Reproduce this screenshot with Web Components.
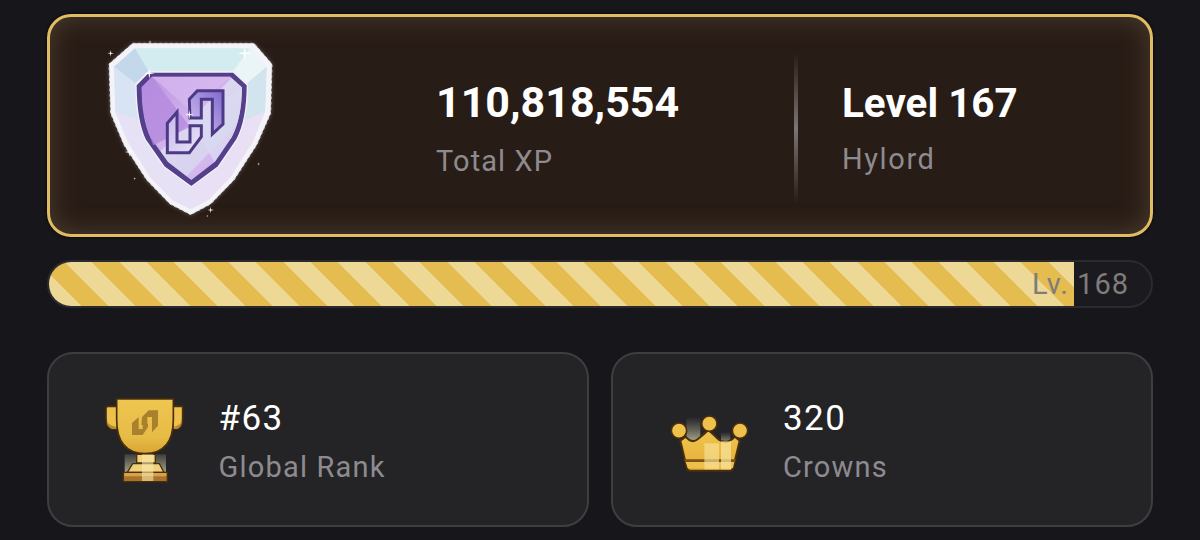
<!DOCTYPE html>
<html lang="en">
<head>
<meta charset="utf-8">
<title>Profile stats</title>
<style>
  html, body { margin: 0; background: #17161a; }
  body { font-family: Roboto, "Liberation Sans", sans-serif; width: 1200px; height: 540px; overflow: hidden; }
</style>
</head>
<body>
<stats-page>
  <level-panel>
    <rank-shield slot="badge"></rank-shield>
    <stat-block slot="xp" size="large" label="Total XP">110,818,554</stat-block>
    <stat-block slot="level" size="level" label="Hylord">Level 167</stat-block>
  </level-panel>
  <xp-bar percent="93" label="Lv. 168"></xp-bar>
  <card-row>
    <info-card>
      <trophy-icon slot="icon"></trophy-icon>
      <stat-block size="small" label="Global Rank">#63</stat-block>
    </info-card>
    <info-card crown>
      <crown-icon slot="icon"></crown-icon>
      <stat-block size="small" label="Crowns">320</stat-block>
    </info-card>
  </card-row>
</stats-page>

<script>
class StatsPage extends HTMLElement {
  constructor() {
    super();
    this.attachShadow({ mode: 'open' });
  }

  connectedCallback() {
    this.shadowRoot.innerHTML = `
      <style>
        :host {
          display: block;
          padding: 14px 47px 0;
          box-sizing: border-box;
          width: 1200px;
          height: 540px;
        }
      </style>
      <slot></slot>
    `;
  }
}

class CardRow extends HTMLElement {
  constructor() {
    super();
    this.attachShadow({ mode: 'open' });
  }

  connectedCallback() {
    this.shadowRoot.innerHTML = `
      <style>
        :host {
          display: grid;
          grid-template-columns: 542px 542px;
          gap: 22px;
          margin-top: 44px;
        }
      </style>
      <slot></slot>
    `;
  }
}

class LevelPanel extends HTMLElement {
  constructor() {
    super();
    this.attachShadow({ mode: 'open' });
  }

  connectedCallback() {
    this.shadowRoot.innerHTML = `
      <style>
        :host {
          display: flex;
          align-items: stretch;
          box-sizing: border-box;
          height: 223px;
          width: 1106px;
          border: 3px solid #e1bc62;
          border-radius: 24px;
          background: #281c16;
          box-shadow: inset 0 0 26px #4c3e30, 0 0 3px #000;
        }
        .badge {
          width: 346px;
          padding: 13px 0 0 40px;
          flex: none;
        }
        .xp {
          width: 358px;
          flex: none;
          align-self: center;
          padding-top: 5px;
        }
        .divider {
          width: 4px;
          flex: none;
          margin: 36px 0 30px;
          background: linear-gradient(180deg, transparent, #7b7573 50%, transparent);
          filter: blur(.6px);
        }
        .level {
          padding-left: 44px;
          padding-top: 4px;
          align-self: center;
        }
      </style>
      <div class="badge"><slot name="badge"></slot></div>
      <div class="xp"><slot name="xp"></slot></div>
      <div class="divider"></div>
      <div class="level"><slot name="level"></slot></div>
    `;
  }
}

class StatBlock extends HTMLElement {
  constructor() {
    super();
    this.attachShadow({ mode: 'open' });
  }

  connectedCallback() {
    const label = this.getAttribute('label') || '';
    this.shadowRoot.innerHTML = `
      <style>
        :host { display: block; color: #fff; }
        .value { font-weight: 700; font-size: 43px; line-height: 52px; white-space: nowrap; }
        .label { color: #8e8b90; font-size: 29px; line-height: 38px; letter-spacing: 1.1px; white-space: nowrap; margin-top: 14px; }
        :host([size="level"]) .value { font-size: 40.4px; }
        :host([size="level"]) .label { letter-spacing: 1.6px; margin-top: 10px; }
        :host([size="small"]) .value { font-weight: 400; font-size: 35px; line-height: 40px; letter-spacing: 1.4px; }
        :host([size="small"]) .label { line-height: 36px; margin-top: 10px; letter-spacing: 1.2px; }
      </style>
      <div class="value"><slot></slot></div>
      <div class="label">${label}</div>
    `;
  }
}

class XpBar extends HTMLElement {
  constructor() {
    super();
    this.attachShadow({ mode: 'open' });
  }

  connectedCallback() {
    const percent = this.getAttribute('percent') || '0';
    const label = this.getAttribute('label') || '';
    this.shadowRoot.innerHTML = `
      <style>
        :host {
          display: block;
          position: relative;
          box-sizing: border-box;
          height: 48px;
          width: 1106px;
          margin-top: 23px;
          border: 2px solid #2b2b2f;
          border-radius: 24px;
          background: #1b1b1f;
          overflow: hidden;
        }
        .fill {
          height: 100%;
          width: ${percent}%;
          box-sizing: border-box;
          background: repeating-linear-gradient(45deg,
            #eed896 3.54px 22.86px, #e5bc50 22.86px 42.18px);
        }
        .label {
          position: absolute;
          right: 22px;
          top: 0;
          line-height: 44px;
          font-size: 29px;
          letter-spacing: 1px;
          color: #807c7a;
        }
      </style>
      <div class="fill"></div>
      <div class="label">${label}</div>
    `;
  }
}

class InfoCard extends HTMLElement {
  constructor() {
    super();
    this.attachShadow({ mode: 'open' });
  }

  connectedCallback() {
    this.shadowRoot.innerHTML = `
      <style>
        :host {
          display: flex;
          align-items: center;
          box-sizing: border-box;
          height: 175px;
          border: 2.5px solid #3e3e42;
          border-radius: 26px;
          background: #242427;
        }
        .icon { width: 169.5px; flex: none; padding-left: 40.5px; box-sizing: border-box; }
        :host([crown]) .icon { padding-left: 41.5px; width: 170px; }
        .text { padding-top: 4px; }
      </style>
      <div class="icon"><slot name="icon"></slot></div>
      <div class="text"><slot></slot></div>
    `;
  }
}

class RankShield extends HTMLElement {
  constructor() {
    super();
    this.attachShadow({ mode: 'open' });
  }

  connectedCallback() {
    const sparkle = (x, y, r) =>
      `<path d="M${x} ${y - r}L${x + r * .14} ${y - r * .14}L${x + r} ${y}L${x + r * .14} ${y + r * .14}L${x} ${y + r}L${x - r * .14} ${y + r * .14}L${x - r} ${y}L${x - r * .14} ${y - r * .14}Z" fill="#fff"/>`;
    const outline = 'M128 40H492L546 102L542 250L500 345L432 450L362 522L302 554L240 522L170 450L102 345L62 250L57 102Z';
    this.shadowRoot.innerHTML = `
      <style>
        :host { display: block; width: 200px; height: 195px; }
        svg { display: block; }
      </style>
      <svg width="200" height="195" viewBox="0 0 600 585" role="img" aria-label="Hylord badge">
        <defs>
          <linearGradient id="rim" x1="0" y1="0" x2="0" y2="1">
            <stop offset="0" stop-color="#e6f1f5"/>
            <stop offset=".55" stop-color="#d6e1f1"/>
            <stop offset=".72" stop-color="#e3dcf2"/>
            <stop offset="1" stop-color="#efe9f6"/>
          </linearGradient>
          <linearGradient id="gem" x1="0" y1="0" x2="1" y2="1">
            <stop offset="0" stop-color="#b98fe0"/>
            <stop offset=".45" stop-color="#d2b4ec"/>
            <stop offset=".46" stop-color="#dcd6f0"/>
            <stop offset=".7" stop-color="#d7d2ef"/>
            <stop offset=".71" stop-color="#d5b8ee"/>
            <stop offset="1" stop-color="#c7a5e6"/>
          </linearGradient>
          <linearGradient id="logoTop" x1="0" y1="1" x2="1" y2="0">
            <stop offset="0" stop-color="#d6c4f0"/>
            <stop offset="1" stop-color="#8068cf"/>
          </linearGradient>
          <linearGradient id="logoLow" x1="0" y1="0" x2="1" y2="1">
            <stop offset="0" stop-color="#c9b6ec"/>
            <stop offset="1" stop-color="#e8e6f6"/>
          </linearGradient>
          <filter id="soft" x="-10%" y="-10%" width="120%" height="120%"><feGaussianBlur stdDeviation="6"/></filter>
        </defs>
        <path d="${outline}" fill="#a9a4b2" opacity=".45" filter="url(#soft)"/>
        <path d="${outline}" fill="#f4f4f8" stroke="#d8d8e0" stroke-width="3" stroke-dasharray="8 8"/>
        <path d="M135 55H480L530 110L525 245L488 335L422 440L355 510L302 538L247 510L180 440L114 335L76 245L72 110Z" fill="url(#rim)"/>
        <path d="M135 55H480L430 122H175Z" fill="#d3ecef"/>
        <path d="M72 110L135 55L175 122L136 160Z" fill="#c3d8ea"/>
        <path d="M530 110L480 55L430 122L472 160Z" fill="#eaf5f7"/>
        <path d="M72 110L136 160L150 270L76 245Z" fill="#d8e4f3"/>
        <path d="M530 110L472 160L455 275L525 245Z" fill="#d2e4ee"/>
        <path d="M76 245L150 270L302 480L302 538L247 510L180 440L114 335Z" fill="#e6e1f5"/>
        <path d="M525 245L455 275L302 480V538L355 510L422 440L488 335Z" fill="#e9e0f5"/>
        <path d="M176 126H430L472 165Q472 270 440 330L385 410L304 470L222 410L166 330Q138 270 138 165Z" fill="#54408a" stroke="#f4f0fa" stroke-width="4"/>
        <path d="M186 140H421L456 172Q455 266 425 322L374 396L304 450L234 396L181 322Q155 266 155 172Z" fill="url(#gem)"/>
        <path d="M186 140H421L300 240Z" fill="#d7b8ef" opacity=".75"/>
        <path d="M155 172L186 140L300 290L190 346Q155 266 155 172Z" fill="#b48ade" opacity=".8"/>
        <path d="M300 270L456 172Q455 266 425 322L374 396Z" fill="#dad9f1" opacity=".8"/>
        <path d="M298 208L322 182H399V282L367 312V208H334V264H300Z" fill="url(#logoTop)" stroke="#4d3a86" stroke-width="9" stroke-linejoin="miter"/>
        <path d="M232 280L261 246V336H300V287H334V320L298 368H232Z" fill="url(#logoLow)" stroke="#4d3a86" stroke-width="9" stroke-linejoin="miter"/>
        <g>
          ${sparkle(62, 70, 10)}
          ${sparkle(180, 36, 6)}
          ${sparkle(178, 130, 16)}
          ${sparkle(298, 254, 14)}
          ${sparkle(118, 366, 14)}
          ${sparkle(134, 446, 5)}
          ${sparkle(506, 402, 5)}
          ${sparkle(362, 540, 10)}
          ${sparkle(352, 558, 4)}
          ${sparkle(464, 70, 22)}
        </g>
      </svg>
    `;
  }
}

class TrophyIcon extends HTMLElement {
  constructor() {
    super();
    this.attachShadow({ mode: 'open' });
  }

  connectedCallback() {
    this.shadowRoot.innerHTML = `
      <style>
        :host { display: block; width: 110px; height: 110px; }
        svg { display: block; }
      </style>
      <svg width="110" height="110" viewBox="0 0 330 330" role="img" aria-label="Trophy">
        <defs>
          <linearGradient id="cup" x1="0" y1="0" x2="0" y2="1">
            <stop offset="0" stop-color="#efc650"/>
            <stop offset=".7" stop-color="#e6bb46"/>
            <stop offset="1" stop-color="#d9a534"/>
          </linearGradient>
          <linearGradient id="glow" x1="0" y1="0" x2="0" y2="1">
            <stop offset="0" stop-color="#d9d5b0" stop-opacity=".15"/>
            <stop offset="1" stop-color="#d9d5b0" stop-opacity=".7"/>
          </linearGradient>
        </defs>
        <path d="M104 208H228V262H104Z" fill="url(#glow)"/>
        <path d="M52 64H84V132H66Q48 126 48 100V68Z" fill="#eec04c" stroke="#4a2f0c" stroke-width="5"/>
        <path d="M50 108Q56 122 80 126V132H66Q50 126 50 108Z" fill="#b98a2c"/>
        <path d="M248 64H278V100Q278 126 262 132H248Z" fill="#eec04c" stroke="#4a2f0c" stroke-width="5"/>
        <path d="M250 126Q270 122 276 108Q276 126 262 132H250Z" fill="#b98a2c"/>
        <path d="M80 42H250V104Q250 204 165 206Q80 204 80 104Z" fill="url(#cup)" stroke="#4a2f0c" stroke-width="5"/>
        <path d="M140 208H196V234H140Z" fill="#f0d27a" stroke="#4a2f0c" stroke-width="4"/>
        <path d="M128 236H208L222 262H112Z" fill="#efd27e" stroke="#4a2f0c" stroke-width="4"/>
        <path d="M100 262H232V290H100Z" fill="#a8742c" stroke="#4a2f0c" stroke-width="4"/>
        <path d="M103 264H229V274H103Z" fill="#d9a24a"/>
        <path d="M156 208H190V288H156Z" fill="#f8e8a8" opacity=".6"/>
        <path d="M156 96L176 76H204V122L186 142V96H172V120H154ZM126 114L146 96V132H158V116H174V126L158 150H126Z" fill="#a9802e"/>
      </svg>
    `;
  }
}

class CrownIcon extends HTMLElement {
  constructor() {
    super();
    this.attachShadow({ mode: 'open' });
  }

  connectedCallback() {
    this.shadowRoot.innerHTML = `
      <style>
        :host { display: block; width: 110px; height: 90px; margin-top: 10px; }
        svg { display: block; }
      </style>
      <svg width="110" height="90" viewBox="0 0 330 270" role="img" aria-label="Crown">
        <defs>
          <linearGradient id="gold" x1="0" y1="0" x2="0" y2="1">
            <stop offset="0" stop-color="#f0c64f"/>
            <stop offset="1" stop-color="#e4ae36"/>
          </linearGradient>
          <linearGradient id="beam" x1="0" y1="0" x2="0" y2="1">
            <stop offset="0" stop-color="#8a8a80" stop-opacity="0"/>
            <stop offset="1" stop-color="#b0ac8e" stop-opacity=".9"/>
          </linearGradient>
        </defs>
        <path d="M94 50H136V120H94Z" fill="url(#beam)"/>
        <path d="M198 96H226V130H198Z" fill="url(#beam)"/>
        <path d="M92 110Q110 132 128 118Q146 104 160 90Q176 104 190 118Q216 136 240 110L254 122L234 206Q232 212 224 212H106Q98 212 96 206L76 122Z" fill="url(#gold)" stroke="#4a2f0c" stroke-width="6" stroke-linejoin="round"/>
        <path d="M88 178H242L240 186H90Z" fill="#7a5216"/>
        <path d="M92 186H238L234 204H98Z" fill="#eebf4c"/>
        <path d="M148 130H192V208H148Z" fill="#f7e29a" opacity=".65"/>
        <path d="M198 124H228V208H198Z" fill="#f7e29a" opacity=".75"/>
        <circle cx="72" cy="92" r="23" fill="#eec04c" stroke="#4a2f0c" stroke-width="5"/>
        <circle cx="163" cy="71" r="23" fill="#eec04c" stroke="#4a2f0c" stroke-width="5"/>
        <circle cx="255" cy="92" r="23" fill="#eec04c" stroke="#4a2f0c" stroke-width="5"/>
      </svg>
    `;
  }
}

customElements.define('stats-page', StatsPage);
customElements.define('card-row', CardRow);
customElements.define('level-panel', LevelPanel);
customElements.define('stat-block', StatBlock);
customElements.define('xp-bar', XpBar);
customElements.define('info-card', InfoCard);
customElements.define('rank-shield', RankShield);
customElements.define('trophy-icon', TrophyIcon);
customElements.define('crown-icon', CrownIcon);
</script>
</body>
</html>
